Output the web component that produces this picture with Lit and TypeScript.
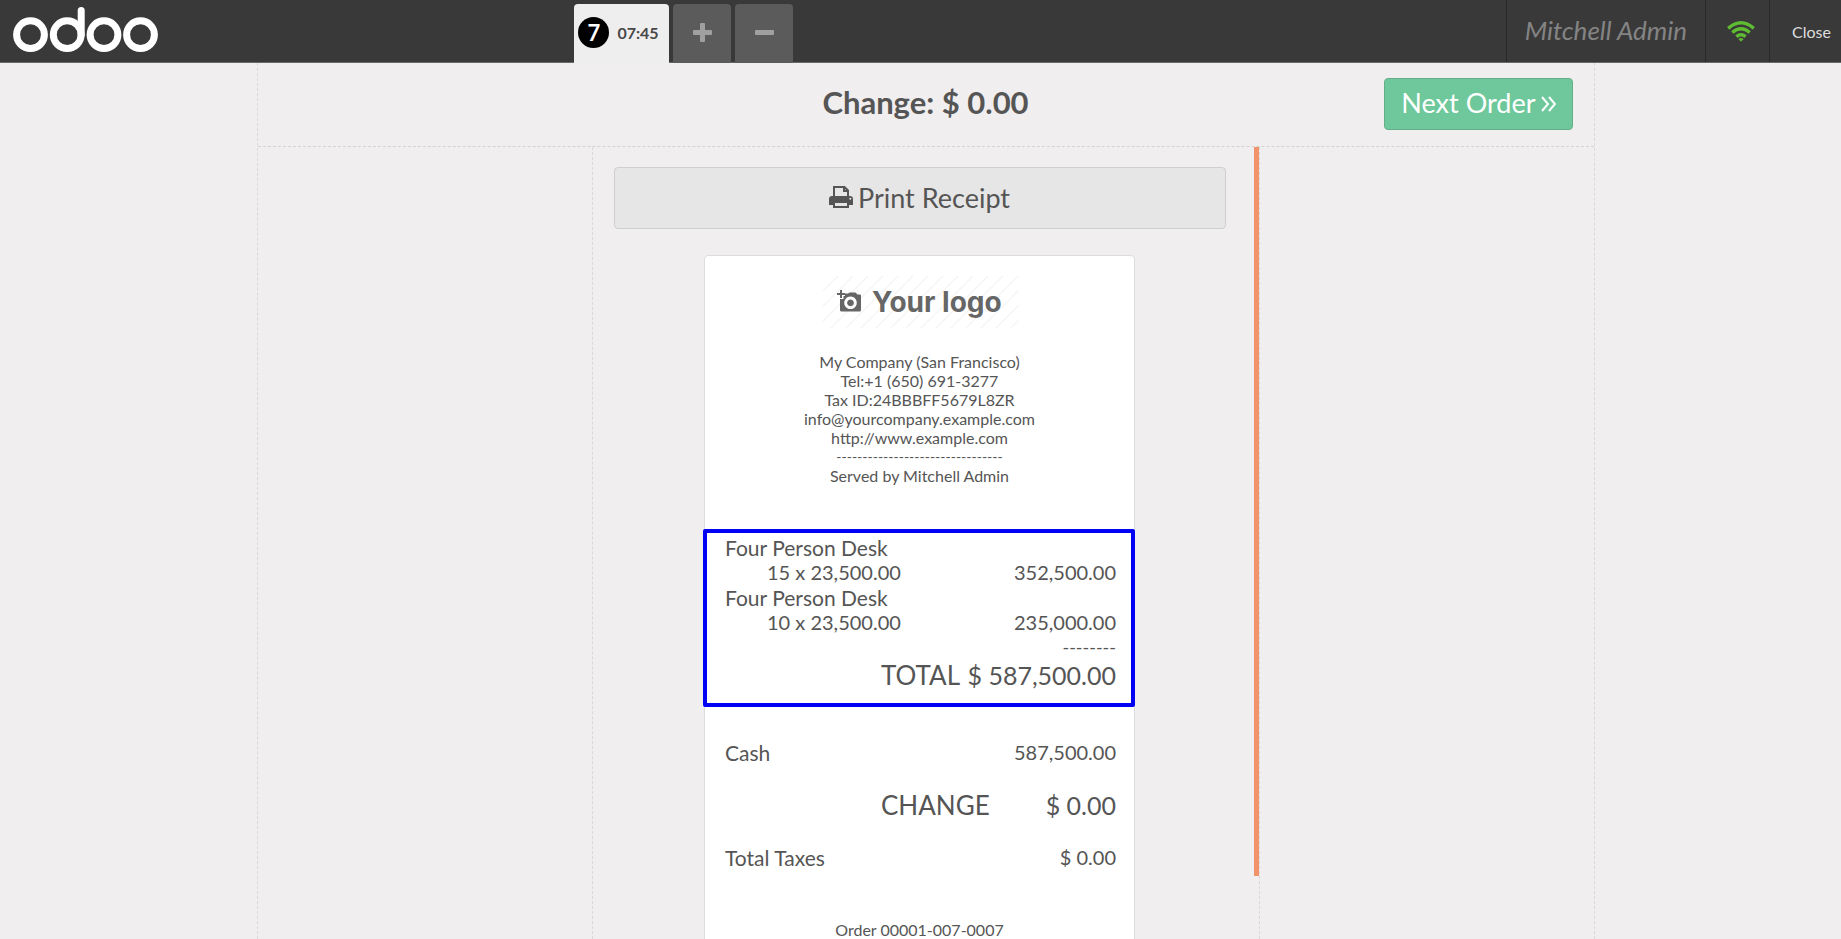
import { LitElement, html, css } from "lit";
import { customElement } from "lit/decorators.js";

const lines = [
  { name: "Four Person Desk", qty: "15 x 23,500.00", total: "352,500.00" },
  { name: "Four Person Desk", qty: "10 x 23,500.00", total: "235,000.00" },
];

@customElement("pos-header")
class PosHeader extends LitElement {
  static styles = css`
    :host { display: block; color: #ddd; font-family: Lato, sans-serif; }
    * { box-sizing: border-box; }
    .bar { display: flex; height: 63px; background: #393939; border-bottom: 1px solid #6b6868; }
    button { font: inherit; color: inherit; background: none; border: 0; padding: 0; margin: 0; cursor: pointer; }
    .brand { flex: 0 0 574px; padding: 7px 13px; }
    .brand svg { display: block; }
    .orders { flex: 1; display: flex; gap: 4px; padding-top: 4px; margin-bottom: -1px; }
    .orders button { width: 58px; padding-bottom: 3px; border-radius: 4px 4px 0 0; background: #5b5b5b; display: flex; align-items: center; justify-content: center; }
    .orders .current { width: 95px; gap: 8px; padding-right: 6px; background: #efeeee; color: #484848; font: bold 16px Lato, sans-serif; }
    .seq { width: 31px; height: 31px; line-height: 31px; border-radius: 50%; background: #000; color: #fff; font-size: 22px; text-align: center; }
    .user, .net, .close { display: flex; align-items: center; justify-content: center; border-left: 1px solid #292929; }
    .user { padding: 0 18px 2px; font-size: 26px; font-style: italic; color: #848484; }
    .net { width: 64px; padding-left: 6px; }
    .bar .close { width: 72px; padding-left: 12px; font-size: 16px; }
  `;
  render() {
    return html`<header class="bar">
      <div class="brand">
        <svg width="146" height="46" viewBox="0 0 146 46" fill="none" stroke="#fff" stroke-width="7" role="img" aria-label="odoo">
          <circle cx="17.5" cy="27.7" r="13.9" /><circle cx="54.2" cy="27.7" r="13.9" />
          <circle cx="91" cy="27.7" r="13.9" /><circle cx="127.5" cy="27.7" r="13.9" />
          <path d="M68.2 27.7V3.6" stroke-linecap="round" />
        </svg>
      </div>
      <nav class="orders">
        <button class="current"><span class="seq">7</span><span>07:45</span></button>
        <button aria-label="New order"><svg width="19" height="20" fill="#a0a0a0"><path d="M8 1h3q1 0 1 1v6h6q1 0 1 1v3q0 1-1 1h-6v6q0 1-1 1H8q-1 0-1-1v-6H1q-1 0-1-1V9q0-1 1-1h6V2q0-1 1-1z" /></svg></button>
        <button aria-label="Delete order"><svg width="19" height="20"><rect y="8" width="19" height="5" rx="1" fill="#a0a0a0" /></svg></button>
      </nav>
      <div class="user">Mitchell Admin</div>
      <div class="net">
        <svg width="28" height="21" viewBox="0 0 28 21" fill="none" stroke="#5fbc32" stroke-width="3.4" role="img" aria-label="Connected">
          <path d="M1.2 7.4Q14-3.8 26.8 7.4M5.3 11.5Q14 4.2 22.7 11.5M9.4 15.6Q14 11.9 18.6 15.6" />
          <path d="M11.4 18Q14 16.2 16.6 18L14 20.7z" fill="#5fbc32" stroke="none" />
        </svg>
      </div>
      <button class="close">Close</button>
    </header>`;
  }
}

@customElement("pos-receipt")
class PosReceipt extends LitElement {
  static styles = css`
    :host { display: block; width: 431px; max-width: 100%; }
    * { box-sizing: border-box; }
    .paper { background: #fff; border: 1px solid #ddd; border-radius: 4px; padding: 20px 18px 20px 20px; font-size: 21px; line-height: 25px; }
    .logo { display: block; margin: 0 auto; }
    .logo text { font: bold 28px Inter, sans-serif; }
    .contact { margin: 24px 0 44px; padding-right: 2px; text-align: center; font-size: 16px; line-height: 19px; }
    .divider { font-size: 14px; }
    .marked { margin: 0 -19px 0 -22px; padding: 2px 15px 12px 18px; border: 4px solid #0000f5; border-radius: 2px; }
    .row { display: flex; justify-content: space-between; }
    .num { font-size: 20px; }
    .qty { padding-left: 42px; }
    .rule { text-align: right; font-size: 18px; }
    .big { display: flex; justify-content: space-between; padding-left: 156px; font-size: 26px; line-height: 31px; }
    .big .num { font-size: 25px; }
    .payments { padding: 33px 0 0; }
    .payments .big { margin: 25px 0 24px; }
    .order { margin-top: 50px; padding-right: 2px; text-align: center; font-size: 16px; line-height: 19px; }
  `;
  render() {
    return html`<article class="paper">
      <svg class="logo" width="196" height="52" role="img" aria-label="Your logo">
        <defs><pattern id="hatch" width="15" height="15" patternUnits="userSpaceOnUse">
          <path d="M-2 17L17-2M-2 2L2-2M13 17L17 13" stroke="#f3f3f3" stroke-width="1.2" />
        </pattern></defs>
        <rect width="196" height="52" fill="url(#hatch)" />
        <g fill="#666">
          <path fill-rule="evenodd" d="M22 17.500h3l1.500-1h6l2 2h2.500q1 0 1 1V34q0 1.500-1.500 1.500H18.500q-1.500 0-1.500-1.500V23h3.500V20H22zM27.500 20.500a6.300 6.300 0 1 0 .01 0zM27.500 23.500a3.400 3.400 0 1 1-.01 0z" />
          <path d="M17 14h2v3h3v2h-3v3h-2v-3h-3v-2h3z" />
          <text x="49" y="36">Your logo</text>
        </g>
      </svg>
      <div class="contact">
        <div>My Company (San Francisco)</div>
        <div>Tel:+1 (650) 691-3277</div>
        <div>Tax ID:24BBBFF5679L8ZR</div>
        <div>info@yourcompany.example.com</div>
        <div>http://www.example.com</div>
        <div class="divider">--------------------------------</div>
        <div>Served by Mitchell Admin</div>
      </div>
      <section class="marked">
        ${lines.map((l) => html`<div>${l.name}</div>
          <div class="row num"><span class="qty">${l.qty}</span><span>${l.total}</span></div>`)}
        <div class="rule">--------</div>
        <div class="big"><span>TOTAL</span><span class="num">$ 587,500.00</span></div>
      </section>
      <section class="payments">
        <div class="row"><span>Cash</span><span class="num">587,500.00</span></div>
        <div class="big"><span>CHANGE</span><span class="num">$ 0.00</span></div>
        <div class="row"><span>Total Taxes</span><span class="num">$ 0.00</span></div>
      </section>
      <div class="order">Order 00001-007-0007</div>
    </article>`;
  }
}

@customElement("app-root")
class AppRoot extends LitElement {
  static styles = css`
    :host { display: flex; flex-direction: column; height: 100vh; overflow: hidden; background: #f0eeee; color: #555; font-family: Lato, sans-serif; }
    * { box-sizing: border-box; }
    pos-header { flex: none; }
    main { flex: 1; min-height: 0; display: flex; justify-content: center; padding-left: 10px; }
    .screen { flex: 1; max-width: 1338px; display: flex; flex-direction: column; border: dashed #d9d9d9; border-width: 0 1px; }
    .top { flex: none; display: grid; grid-template-columns: 1fr auto 1fr; align-items: center; height: 84px; padding: 0 21px 2px; border-bottom: 1px dashed #d3d3d3; }
    h1 { grid-column: 2; margin: 0; padding-bottom: 4px; font-size: 31px; line-height: 38px; }
    button { display: flex; align-items: center; justify-content: center; border-radius: 4px; font: 27px Lato, sans-serif; cursor: pointer; }
    .next { justify-self: end; height: 52px; padding: 0 16px 2px; gap: 5px; color: #fff; background: #6ec89b; border: 1px solid #64af8a; }
    .center { flex: 1; min-height: 0; width: 50%; margin: 0 auto; display: flex; border: dashed #d9d9d9; border-width: 0 1px; }
    .content { flex: 1; min-width: 0; overflow: hidden; padding: 20px 20px 0 21px; display: flex; flex-direction: column; align-items: center; gap: 26px; }
    .content > * { flex: none; }
    .print { width: 100%; height: 62px; padding-bottom: 3px; gap: 5px; color: #555; background: #e6e6e6; border: 1px solid #cfcfcf; }
    .scroll { width: 13px; padding-left: 8px; }
    .thumb { height: 92%; background: #f2936c; }
  `;
  render() {
    return html`<pos-header></pos-header>
      <main><div class="screen">
        <div class="top">
          <h1>Change: $ 0.00</h1>
          <button class="next">Next Order
            <svg width="15" height="18" fill="none" stroke="#fff" stroke-width="2" aria-hidden="true"><path d="M1 3l6 7-6 7M8 3l6 7-6 7" /></svg>
          </button>
        </div>
        <div class="center">
          <div class="content">
            <button class="print">
              <svg width="24" height="24" viewBox="0 0 24 24" fill="none" stroke="#555" stroke-width="2" aria-hidden="true">
                <path d="M5 12V2h10.500L19 5.500V12M15 2v4h4M5 17v5h14v-5z" />
                <path d="M0 20v-6q0-3 3-3h18q3 0 3 3v6h-4v-4H4v4z" fill="#555" stroke="none" />
                <circle cx="21.300" cy="13.800" r="1" fill="#e6e6e6" stroke="none" />
              </svg>Print Receipt
            </button>
            <pos-receipt></pos-receipt>
          </div>
          <div class="scroll"><div class="thumb"></div></div>
        </div>
      </div></main>`;
  }
}
